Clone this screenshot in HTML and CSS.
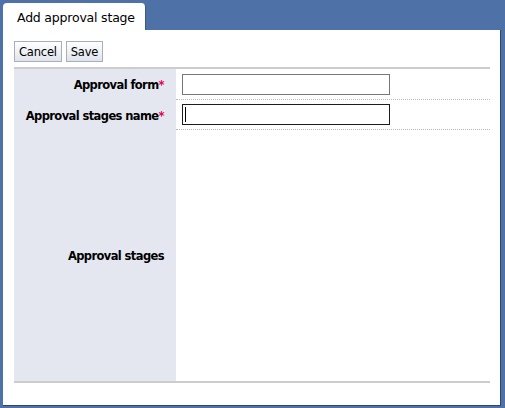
FILE: index.html
```html
<!DOCTYPE html>
<html>
<head>
<meta charset="utf-8">
<link rel="stylesheet" href="styles.css">
</head>
<body>
<div class="window">
  <div class="tabs">
    <div class="tab">Add approval stage</div>
  </div>
  <div class="panel">
    <div class="toolbar">
      <button class="btn">Cancel</button>
      <button class="btn">Save</button>
    </div>
    <div class="form">
      <div class="label row1">Approval form<span class="req">*</span></div>
      <div class="value row1"><input class="field" type="text"></div>
      <div class="label row2">Approval stages name<span class="req">*</span></div>
      <div class="value row2"><input class="field focus" type="text"><span class="caret"></span></div>
      <div class="label row3">Approval stages</div>
      <div class="value row3"></div>
    </div>
  </div>
</div>
</body>
</html>
```
FILE: styles.css
```css
html, body {
  margin: 0;
  padding: 0;
  background: #4e72a7;
  font-family: "DejaVu Sans", Verdana, sans-serif;
  width: 505px;
  height: 408px;
  overflow: hidden;
}
.window {
  padding: 3px 4px 0 3px;
}
.tabs {
  display: flex;
  height: 27px;
}
.tab {
  width: 143px;
  height: 27px;
  box-sizing: border-box;
  background: #fff;
  border-radius: 4px 4px 0 0;
  border-right: 1px solid #3d5a86;
  font-size: 12.5px;
  color: #000;
  padding: 7px 0 0 14px;
  letter-spacing: -0.2px;
}
.panel {
  background: #fff;
  height: 376px;
  box-sizing: border-box;
  border-right: 1px solid #2f476b;
  border-bottom: 1px solid #2f476b;
  padding: 11px 10px 0 11px;
}
.toolbar {
  display: flex;
  gap: 4px;
  height: 21px;
  margin-bottom: 5px;
}
.btn {
  font-family: "DejaVu Sans", Verdana, sans-serif;
  font-size: 11.5px;
  letter-spacing: -0.2px;
  height: 21px;
  padding: 0 4px;
  margin: 0;
  color: #000;
  background: linear-gradient(#ffffff, #dfe4ec);
  border: 1px solid #a7afbd;
  border-radius: 0;
}
.form {
  display: grid;
  grid-template-columns: 162px 1fr;
  grid-template-rows: 31px 30px 251px;
  border-top: 2px solid #cdcdcd;
  border-bottom: 2px solid #cdcdcd;
}
.label {
  background: #e4e7ef;
  font-weight: bold;
  font-size: 11.5px;
  letter-spacing: -0.6px;
  color: #000;
  display: flex;
  align-items: center;
  justify-content: flex-end;
  padding-right: 12px;
  padding-top: 1px;
}
.req {
  color: #e8004c;
  font-weight: bold;
}
.value {
  display: flex;
  align-items: center;
  padding-left: 6px;
  position: relative;
}
.row1.value, .row2.value {
  border-bottom: 1px dotted #b8b8b8;
}
.field {
  width: 208px;
  height: 21px;
  box-sizing: border-box;
  border: 1px solid #777;
  margin: 0;
  padding: 0;
  outline: none;
}
.field.focus {
  border: 1px solid #1c1c1c;
}
.caret {
  position: absolute;
  left: 9px;
  top: 7px;
  width: 1px;
  height: 15px;
  background: #000;
}
```
